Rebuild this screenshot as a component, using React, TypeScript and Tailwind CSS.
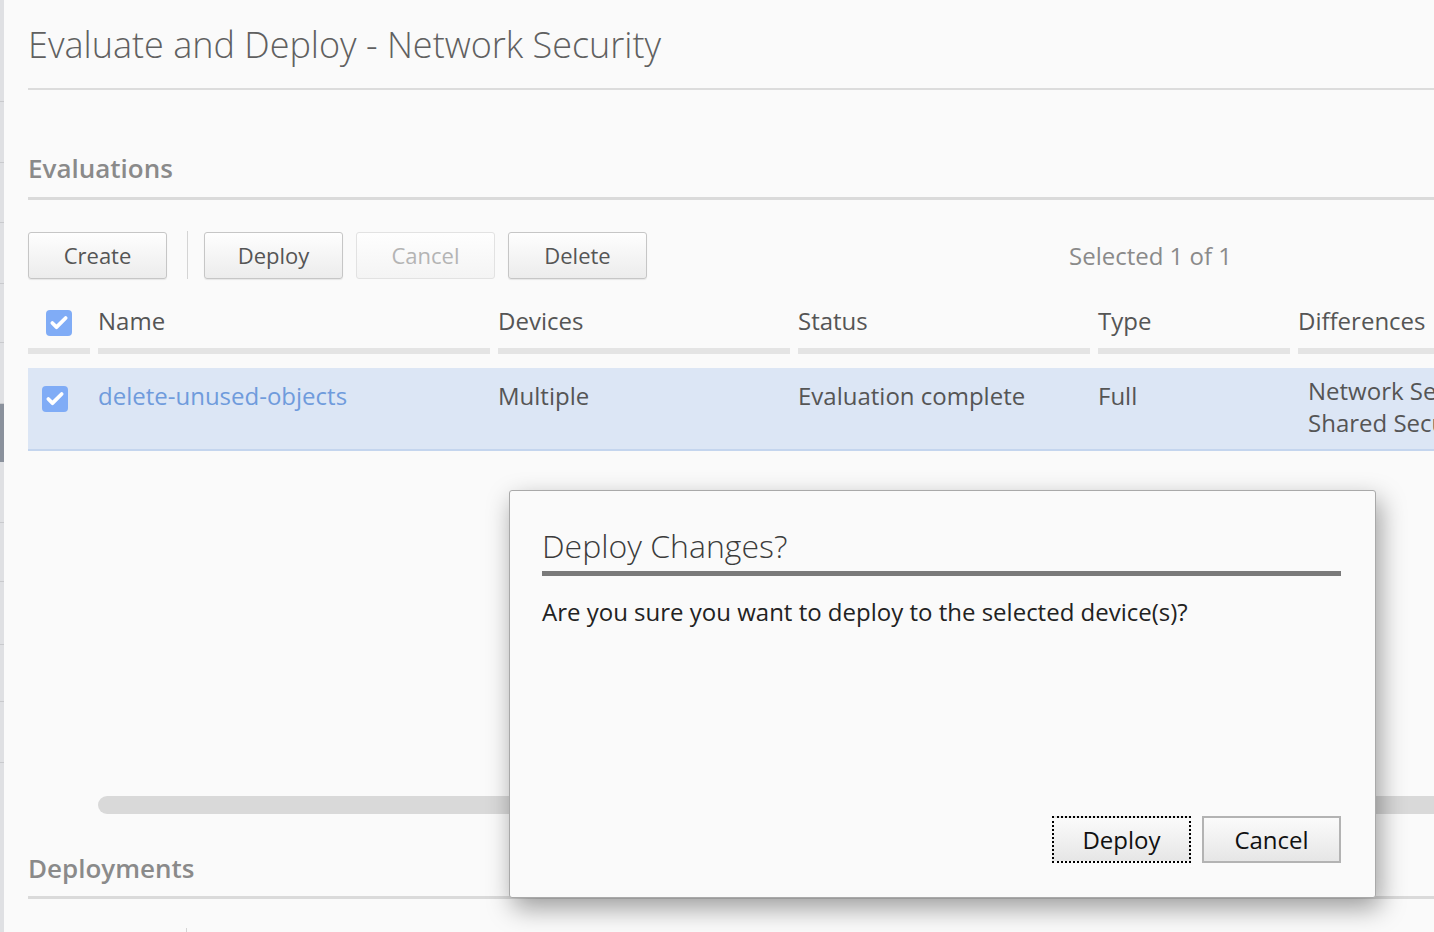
import { Check } from 'lucide-react';

const railStops = [102, 61, 60, 61, 59, 61, 58, 61, 59, 63, 57, 61];

function Rail() {
  return (
    <div className="w-[4px] shrink-0 bg-[#dfe0e3] flex flex-col">
      {railStops.map((h, i) => (
        <div
          key={i}
          style={{ height: h }}
          className={i === 6 ? 'bg-[#8a919c]' : 'border-b border-[#c9cacd]'}
        />
      ))}
    </div>
  );
}

function Box({ className = '' }: { className?: string }) {
  return (
    <span className={`flex items-center justify-center w-[26px] h-[26px] rounded-[4px] bg-[#80acf6] ${className}`}>
      <Check size={20} strokeWidth={4.5} className="text-white" />
    </span>
  );
}

function ToolButton({ label, disabled }: { label: string; disabled?: boolean }) {
  return (
    <button
      className={`w-[139px] h-[47px] rounded-[3px] border text-[22px] bg-gradient-to-b from-[#fefefe] to-[#ececec] ${
        disabled
          ? 'border-[#e2e2e2] text-[#b4b4b4] from-[#fdfdfd] to-[#f4f4f4]'
          : 'border-[#c6c6c6] text-[#555] shadow-[0_1px_1px_rgba(0,0,0,0.08)]'
      }`}
    >
      {label}
    </button>
  );
}

const headers = ['Name', 'Devices', 'Status', 'Type', 'Differences'];

export default function App() {
  return (
    <div
      className="relative flex h-[932px] overflow-hidden bg-[#fafafa]"
      style={{ fontFamily: '"Open Sans", "Noto Sans", sans-serif' }}
    >
      <Rail />
      <main className="flex-1 min-w-0 pl-6">
        <h1 className="pt-[20px] text-[36px] leading-[50px] font-light text-[#606060] whitespace-nowrap">
          Evaluate and Deploy - Network Security
        </h1>
        <div className="mt-[18px] h-[2px] bg-[#dcdcdc]" />

        <h2 className="mt-[63px] text-[26px] leading-[30px] font-semibold text-[#8a8a8a]">Evaluations</h2>
        <div className="mt-[14px] h-[3px] bg-[#dadada]" />

        <div className="mt-[32px] flex items-center">
          <ToolButton label="Create" />
          <div className="ml-[20px] mr-[16px] w-px h-[48px] bg-[#d4d4d4] -mt-[2px]" />
          <div className="flex gap-[13px]">
            <ToolButton label="Deploy" />
            <ToolButton label="Cancel" disabled />
            <ToolButton label="Delete" />
          </div>
          <span className="ml-[422px] text-[24px] text-[#8a8a8a] whitespace-nowrap">Selected 1 of 1</span>
        </div>

        <div className="mt-[27px] grid grid-cols-[62px_392px_292px_292px_192px_300px] gap-x-2 w-[1600px]">
          <div className="flex flex-col">
            <div className="h-[30px] flex items-center justify-center">
              <Box className="mt-[4px]" />
            </div>
            <div className="mt-[12px] h-[6px] bg-[#e4e4e4]" />
          </div>
          {headers.map((h) => (
            <div key={h} className="flex flex-col">
              <span className="h-[30px] leading-[30px] text-[24px] text-[#555]">{h}</span>
              <div className="mt-[12px] h-[6px] bg-[#e4e4e4]" />
            </div>
          ))}
        </div>

        <div className="mt-[14px] h-[83px] w-[1600px] bg-[#dce6f5] border-b-2 border-[#c4d5ee] grid grid-cols-[62px_392px_292px_292px_192px_300px] gap-x-2 text-[24px] text-[#555]">
          <div className="pl-[14px] pt-[18px]">
            <Box />
          </div>
          <div className="pt-[13px] leading-[30px] text-[#6f9bdc]">delete-unused-objects</div>
          <div className="pt-[13px] leading-[30px]">Multiple</div>
          <div className="pt-[13px] leading-[30px]">Evaluation complete</div>
          <div className="pt-[13px] leading-[30px]">Full</div>
          <div className="pl-[10px] pt-[7px] leading-[32px] whitespace-nowrap">
            <div>Network Security</div>
            <div>Shared Security</div>
          </div>
        </div>

        <div className="mt-[345px] ml-[70px] -mr-[40px] h-[18px] rounded-full bg-[#d9d9d9]" />

        <h2 className="mt-[39px] text-[26px] leading-[30px] font-semibold text-[#8a8a8a]">Deployments</h2>
        <div className="mt-[13px] h-[3px] bg-[#dadada]" />
        <div className="mt-[29px] ml-[158px] w-px h-[10px] bg-[#d4d4d4]" />
      </main>

      <div className="absolute left-[509px] top-[490px] w-[867px] h-[408px] rounded-[3px] border border-[#a9a9a9] bg-[#fafafa] shadow-[4px_10px_26px_rgba(0,0,0,0.38)] flex flex-col pl-[32px] pr-[34px] pt-[35px] pb-[34px]">
        <div className="text-[32px] leading-[40px] font-light text-[#3c3c3c]">Deploy Changes?</div>
        <div className="mt-[5px] h-[5px] bg-[#7a7a7a]" />
        <p className="mt-[21px] text-[24px] leading-[30px] text-[#222]">
          Are you sure you want to deploy to the selected device(s)?
        </p>
        <div className="mt-auto flex justify-end gap-[11px]">
          <button className="w-[139px] h-[47px] border-2 border-dotted border-black bg-gradient-to-b from-[#fbfbfb] to-[#e6e6e6] text-[24px] text-[#111]">
            Deploy
          </button>
          <button className="w-[139px] h-[47px] border-2 border-[#b3b3b3] bg-gradient-to-b from-[#fbfbfb] to-[#e6e6e6] text-[24px] text-[#111]">
            Cancel
          </button>
        </div>
      </div>
    </div>
  );
}
